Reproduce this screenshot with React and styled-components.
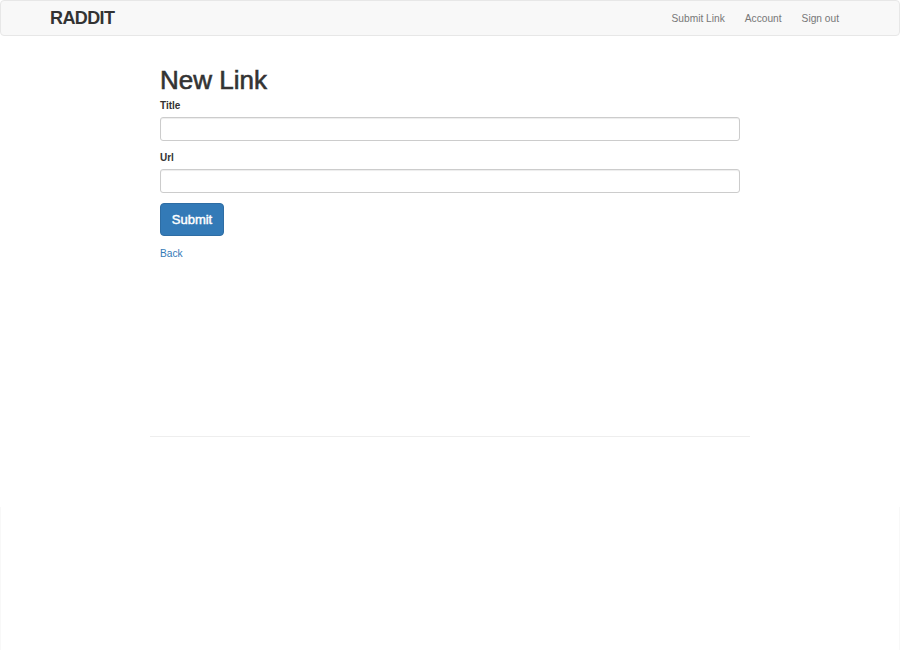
import React from "react";
import styled, { createGlobalStyle } from "styled-components";

const Global = createGlobalStyle`
  html, body { margin: 0; padding: 0; background: #fff; }
  body { font-family: "Liberation Sans", Arial, Helvetica, sans-serif; color: #333; }
  * { box-sizing: border-box; }
`;

const Navbar = styled.nav`
  height: 36px;
  background: #f8f8f8;
  border: 1px solid #e7e7e7;
  border-radius: 4px;
  display: flex;
  align-items: center;
  justify-content: space-between;
  padding: 0 60px 0 49px;
`;

const Brand = styled.a`
  font-size: 18px;
  line-height: 20px;
  font-weight: 700;
  color: #333;
  letter-spacing: -0.6px;
  text-decoration: none;
`;

const NavLinks = styled.ul`
  display: flex;
  align-items: center;
  gap: 20px;
  list-style: none;
  margin: 2px 0 0;
  padding: 0;
  font-size: 10.2px;
  line-height: 14px;
`;

const NavLink = styled.a`
  display: block;
  font-size: 10.2px;
  line-height: 14px;
  color: #777;
  text-decoration: none;
`;

const Main = styled.main`
  width: 580px;
  margin: 0 auto;
  min-height: 400px;
  padding-top: 30px;
`;

const Heading = styled.h1`
  margin: 0 0 4px;
  font-size: 26px;
  font-weight: 400;
  -webkit-text-stroke: 0.6px #333;
  line-height: 1.1;
  color: #333;
`;

const Field = styled.div`
  margin-bottom: 10px;
`;

const Label = styled.label`
  display: block;
  font-size: 10px;
  font-weight: 700;
  line-height: 14px;
  margin-bottom: 4px;
  color: #333;
`;

const Input = styled.input`
  display: block;
  width: 100%;
  height: 24px;
  border: 1px solid #ccc;
  border-radius: 3px;
  padding: 3px 8px;
  font-size: 11px;
  font-family: inherit;
  box-shadow: inset 0 1px 1px rgba(0,0,0,0.075);
`;

const Button = styled.button`
  display: block;
  width: 64px;
  height: 33px;
  background: #337ab7;
  border: 1px solid #2e6da4;
  border-radius: 4px;
  color: #fff;
  font-family: inherit;
  font-size: 13px;
  font-weight: 400;
  -webkit-text-stroke: 0.45px #fff;
  padding: 0;
  margin: 1px 0 7px;
`;

const BackLink = styled.a`
  font-size: 10.2px;
  line-height: 14px;
  color: #337ab7;
  text-decoration: none;
`;

const Rule = styled.hr`
  width: 600px;
  margin: 0 auto;
  border: 0;
  border-top: 1px solid #eee;
`;

const FooterPanel = styled.div`
  margin-top: 70px;
  height: 143px;
  border: 1px solid #f8f8f8;
  border-bottom: 0;
  border-top: 0;
`;

export default function App() {
  return (
    <>
      <Global />
      <Navbar>
        <Brand href="#">RADDIT</Brand>
        <NavLinks>
          <li><NavLink href="#">Submit Link</NavLink></li>
          <li><NavLink href="#">Account</NavLink></li>
          <li><NavLink href="#">Sign out</NavLink></li>
        </NavLinks>
      </Navbar>
      <Main>
        <Heading>New Link</Heading>
        <Field>
          <Label htmlFor="title">Title</Label>
          <Input id="title" type="text" />
        </Field>
        <Field>
          <Label htmlFor="url">Url</Label>
          <Input id="url" type="text" />
        </Field>
        <Button type="submit">Submit</Button>
        <BackLink href="#">Back</BackLink>
      </Main>
      <Rule />
      <FooterPanel />
    </>
  );
}
